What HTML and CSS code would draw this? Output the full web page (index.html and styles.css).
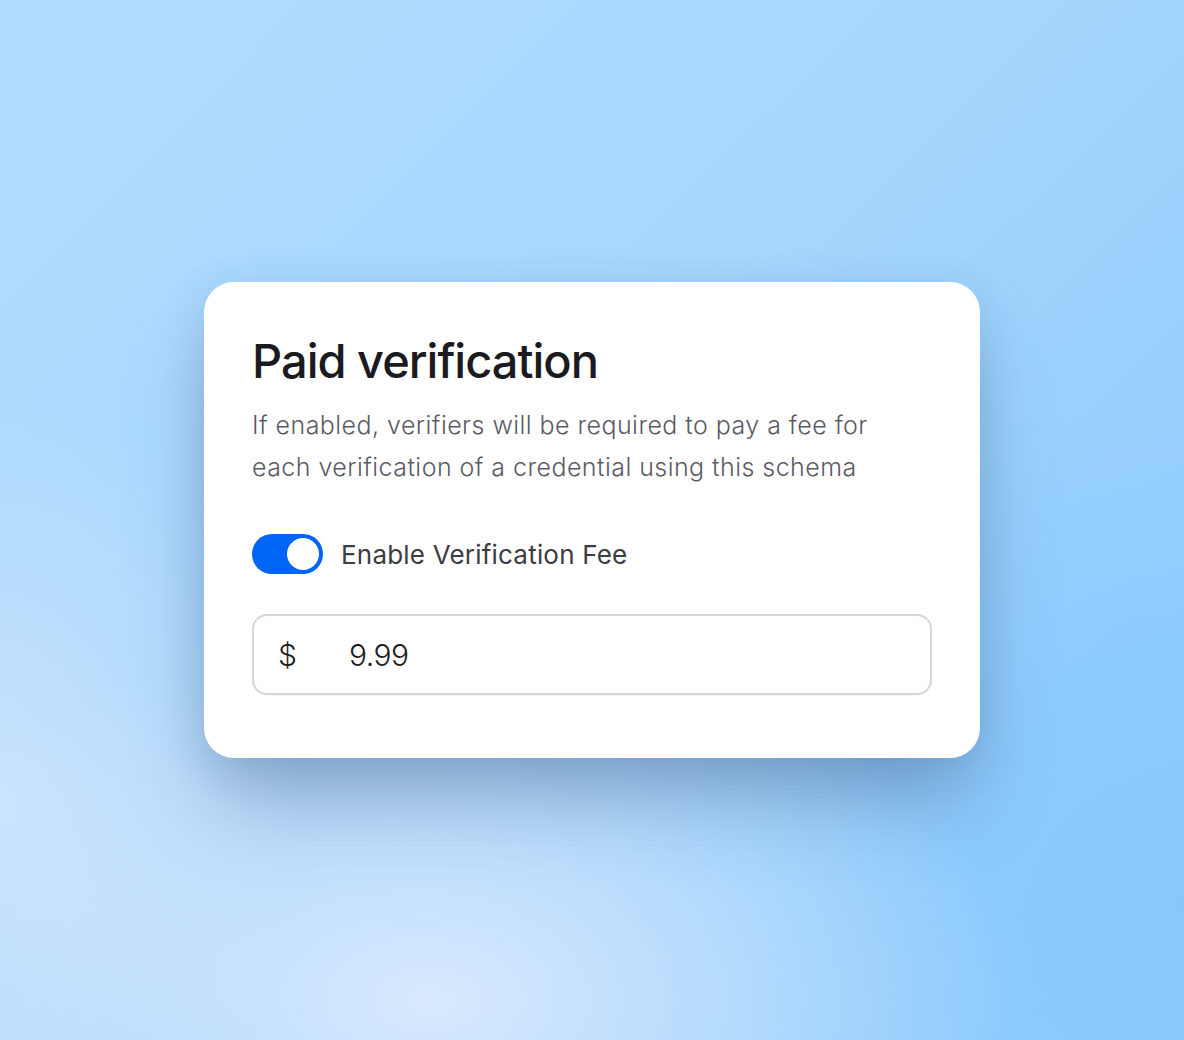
FILE: index.html
```html
<!DOCTYPE html>
<html>
<head>
<meta charset="utf-8">
<link rel="stylesheet" href="styles.css">
</head>
<body>
<main class="stage">
  <section class="card">
    <h1 class="title">Paid verification</h1>
    <p class="desc">If enabled, verifiers will be required to pay a fee for each verification of a credential using this schema</p>
    <label class="toggle-row">
      <span class="switch"><span class="knob"></span></span>
      <span class="toggle-label">Enable Verification Fee</span>
    </label>
    <div class="field">
      <span class="currency">$</span>
      <span class="amount">9.99</span>
    </div>
  </section>
</main>
</body>
</html>
```
FILE: styles.css
```css
html, body {
  margin: 0;
  padding: 0;
}
body {
  width: 1184px;
  height: 1040px;
  overflow: hidden;
  font-family: Inter, "Noto Sans", sans-serif;
}
.stage {
  width: 1184px;
  height: 1040px;
  display: flex;
  justify-content: center;
  align-items: flex-start;
  padding-top: 282px;
  box-sizing: border-box;
  background:
    radial-gradient(ellipse 600px 360px at 430px 1000px, rgba(215,232,253,1) 0%, rgba(215,232,253,0) 100%),
    radial-gradient(ellipse 300px 400px at 0px 800px, rgba(205,228,253,0.9) 0%, rgba(205,228,253,0) 100%),
    radial-gradient(ellipse 600px 500px at 1184px 900px, rgba(134,200,252,1) 0%, rgba(134,200,252,0) 100%),
    linear-gradient(135deg, #b2dcfd 0%, #a6d7fd 45%, #98d0fd 70%, #8ecbfc 100%);
}
.card {
  width: 776px;
  height: 476px;
  box-sizing: border-box;
  background: #fff;
  border-radius: 30px;
  padding: 48px 48px 0 48px;
  box-shadow: 0 50px 80px -10px rgba(80, 105, 140, 0.42), 0 10px 40px rgba(40, 90, 150, 0.15);
}
.title {
  margin: 0;
  font-size: 47px;
  font-weight: 500;
  color: #1b1b1f;
  line-height: 62px;
  letter-spacing: -1px;
}
.desc {
  margin: 12px 0 0 0;
  font-size: 25px;
  line-height: 42px;
  color: #5b5b66;
  font-weight: 300;
  width: 640px;
  letter-spacing: 0.45px;
}
.toggle-row {
  display: flex;
  align-items: center;
  gap: 18px;
  margin-top: 46px;
}
.switch {
  width: 71px;
  height: 40px;
  border-radius: 20px;
  background: #0064f5;
  display: flex;
  align-items: center;
  justify-content: flex-end;
  padding: 0 4px;
  box-sizing: border-box;
}
.knob {
  width: 32px;
  height: 32px;
  border-radius: 50%;
  background: #fff;
}
.toggle-label {
  font-size: 26px;
  color: #3c3c44;
  letter-spacing: 0.2px;
}
.field {
  margin-top: 40px;
  width: 680px;
  height: 81px;
  box-sizing: border-box;
  border: 2px solid #d6d6db;
  border-radius: 15px;
  display: flex;
  align-items: center;
  padding-left: 24px;
  box-shadow: 0 1px 2px rgba(0,0,0,0.04);
}
.currency {
  font-size: 30px;
  font-weight: 300;
  color: #1d1d22;
  width: 71px;
}
.amount {
  font-size: 30px;
  font-weight: 300;
  color: #1d1d22;
  letter-spacing: -0.5px;
}
```
